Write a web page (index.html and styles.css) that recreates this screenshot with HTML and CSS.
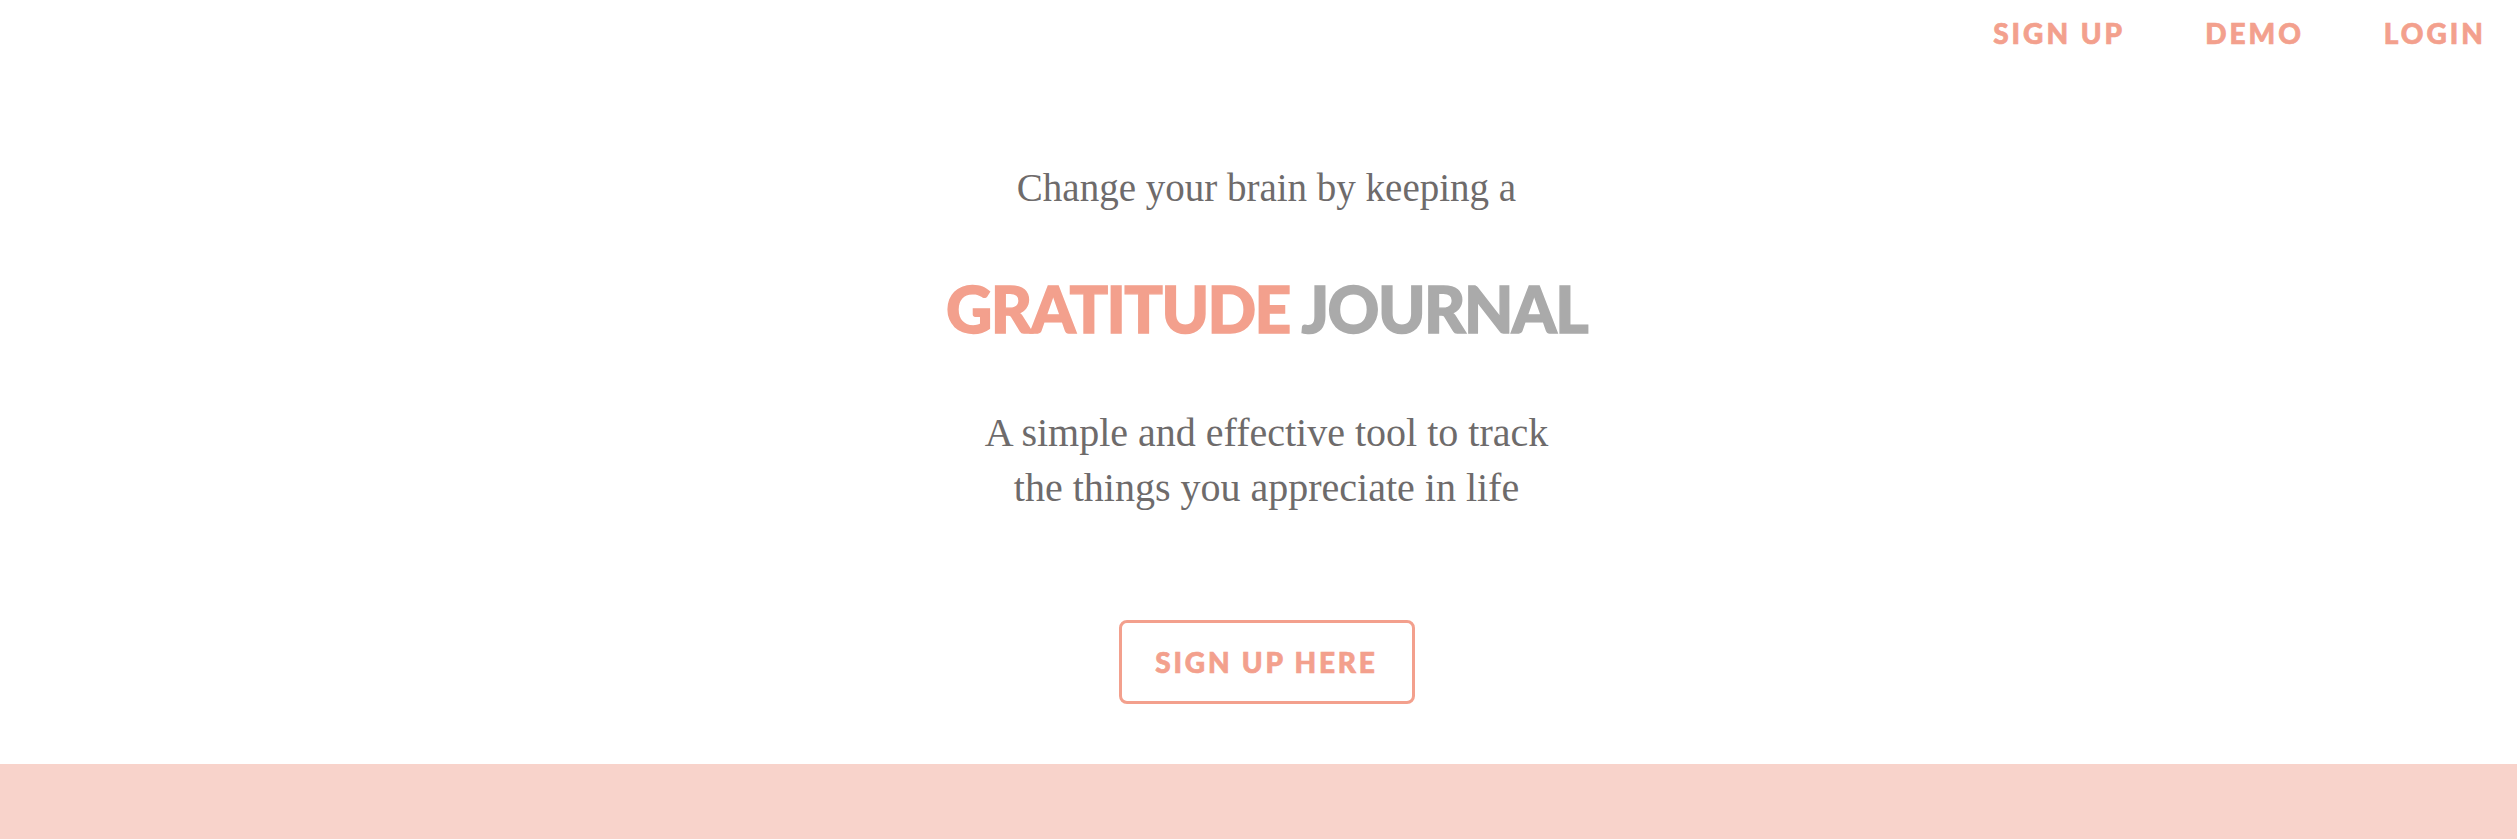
FILE: index.html
```html
<!DOCTYPE html>
<html lang="en">
<head>
<meta charset="utf-8">
<title>Gratitude Journal</title>
<link rel="stylesheet" href="styles.css">
</head>
<body>
<header class="topnav">
  <a class="navlink" href="#">SIGN UP</a>
  <a class="navlink" href="#">DEMO</a>
  <a class="navlink" href="#">LOGIN</a>
</header>
<main class="hero">
  <p class="lead">Change your brain by keeping a</p>
  <h1 class="title"><span class="title-a">GRATITUDE</span> <span class="title-b">JOURNAL</span></h1>
  <p class="sub">A simple and effective tool to track<br>the things you appreciate in life</p>
  <a class="cta" href="#">SIGN UP HERE</a>
</main>
<section class="band"></section>
</body>
</html>
```

FILE: styles.css
```css
html, body {
  margin: 0;
  padding: 0;
  background: #ffffff;
}

body {
  font-family: "Liberation Serif", serif;
}

.topnav {
  display: flex;
  justify-content: flex-end;
  gap: 80px;
  padding: 16px 31px 0 0;
}

.navlink {
  font-family: Lato, "Liberation Sans", sans-serif;
  font-weight: 900;
  font-size: 28px;
  line-height: 34px;
  letter-spacing: 3px;
  color: #f3a08d;
  text-decoration: none;
  -webkit-text-stroke: 0.7px #f3a08d;
}

.hero {
  display: flex;
  flex-direction: column;
  align-items: center;
  padding: 0 0 60px 16px;
}

.lead {
  margin: 110px 0 0;
  font-family: "Liberation Serif", serif;
  font-size: 39px;
  line-height: 55px;
  color: #6e6b6b;
}

.title {
  margin: 55px 0 0;
  font-family: Lato, "Liberation Sans", sans-serif;
  font-weight: 900;
  font-size: 64px;
  line-height: 77px;
  letter-spacing: -1.6px;
}

.title-a {
  color: #f3a08d;
  -webkit-text-stroke: 1.4px #f3a08d;
}

.title-b {
  color: #aaaaaa;
  -webkit-text-stroke: 1.4px #aaaaaa;
}

.sub {
  margin: 58px 0 0;
  font-family: "Liberation Serif", serif;
  font-size: 40px;
  line-height: 55px;
  color: #6e6b6b;
  text-align: center;
}

.cta {
  margin-top: 105px;
  box-sizing: border-box;
  width: 296px;
  height: 84px;
  display: flex;
  align-items: center;
  justify-content: center;
  border: 3px solid #f3a08d;
  border-radius: 8px;
  font-family: Lato, "Liberation Sans", sans-serif;
  font-weight: 900;
  font-size: 28px;
  line-height: 34px;
  letter-spacing: 2.8px;
  color: #f3a08d;
  text-decoration: none;
  -webkit-text-stroke: 0.7px #f3a08d;
}

.band {
  height: 300px;
  background: #f8d3cb;
}
```
